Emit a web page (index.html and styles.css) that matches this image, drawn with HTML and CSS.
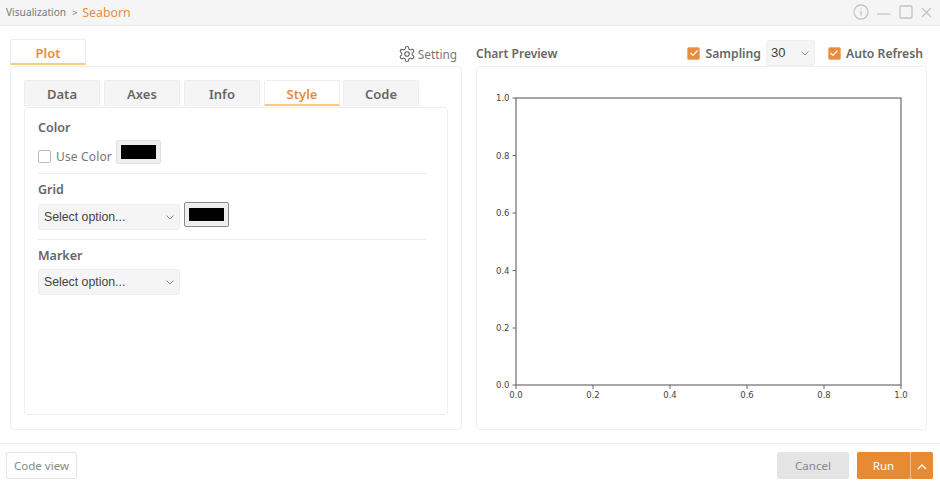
FILE: index.html
```html
<!DOCTYPE html>
<html lang="en">
<head>
    <meta charset="UTF-8">
    <title>Visualization - Seaborn</title>
    <link rel="stylesheet" href="styles.css">
</head>
<body>
    <header class="title-bar">
        <div class="crumbs">
            <span class="crumb">Visualization</span>
            <span class="crumb-sep">&gt;</span>
            <span class="crumb-current">Seaborn</span>
        </div>
        <div class="window-icons">
            <svg width="16" height="16" viewBox="0 0 16 16"><circle cx="8" cy="8" r="7"/><path d="M8 7v4.5M8 4.2v1.4"/></svg>
            <svg width="14" height="16" viewBox="0 0 14 16"><path d="M0 10h13.5"/></svg>
            <svg width="14" height="14" viewBox="0 0 14 14"><rect x="1" y="1" width="12" height="12" rx="1"/></svg>
            <svg width="11" height="11" viewBox="0 0 11 11"><path d="M1 1l9 9M10 1l-9 9"/></svg>
        </div>
    </header>

    <main class="content">
        <section class="left-col">
            <div class="col-head">
                <div class="tab tab-plot tab-active">Plot</div>
                <div class="setting">
                    <svg width="18" height="18" viewBox="0 0 24 24"><path d="M12.22 2h-.44a2 2 0 0 0-2 2v.18a2 2 0 0 1-1 1.73l-.43.25a2 2 0 0 1-2 0l-.15-.08a2 2 0 0 0-2.73.73l-.22.38a2 2 0 0 0 .73 2.73l.15.1a2 2 0 0 1 1 1.72v.51a2 2 0 0 1-1 1.74l-.15.09a2 2 0 0 0-.73 2.73l.22.38a2 2 0 0 0 2.73.73l.15-.08a2 2 0 0 1 2 0l.43.25a2 2 0 0 1 1 1.73V20a2 2 0 0 0 2 2h.44a2 2 0 0 0 2-2v-.18a2 2 0 0 1 1-1.73l.43-.25a2 2 0 0 1 2 0l.15.08a2 2 0 0 0 2.73-.73l.22-.39a2 2 0 0 0-.73-2.73l-.15-.08a2 2 0 0 1-1-1.74v-.5a2 2 0 0 1 1-1.74l.15-.09a2 2 0 0 0 .73-2.73l-.22-.38a2 2 0 0 0-2.73-.73l-.15.08a2 2 0 0 1-2 0l-.43-.25a2 2 0 0 1-1-1.73V4a2 2 0 0 0-2-2z"/><circle cx="12" cy="12" r="3"/></svg>
                    <span>Setting</span>
                </div>
            </div>
            <div class="panel">
                <div class="tabs">
                    <div class="tab">Data</div>
                    <div class="tab">Axes</div>
                    <div class="tab">Info</div>
                    <div class="tab tab-active">Style</div>
                    <div class="tab tab-last">Code</div>
                </div>
                <div class="inner">
                    <div class="group">
                        <h4>Color</h4>
                        <div class="row">
                            <span class="check"></span>
                            <span class="check-label">Use Color</span>
                            <span class="swatch"><i></i></span>
                        </div>
                    </div>
                    <div class="group">
                        <h4>Grid</h4>
                        <div class="row">
                            <div class="select">Select option...<svg class="chev" width="8" height="5" viewBox="0 0 8 5"><path d="M.5.5L4 4 7.5.5"/></svg></div>
                            <span class="swatch swatch-focus"><i></i></span>
                        </div>
                    </div>
                    <div class="group">
                        <h4>Marker</h4>
                        <div class="row">
                            <div class="select">Select option...<svg class="chev" width="8" height="5" viewBox="0 0 8 5"><path d="M.5.5L4 4 7.5.5"/></svg></div>
                        </div>
                    </div>
                </div>
            </div>
        </section>

        <section class="right-col">
            <div class="col-head preview-head">
                <span class="preview-title">Chart Preview</span>
                <div class="preview-opts">
                    <span class="check check-on"><svg width="10" height="8" viewBox="0 0 10 8"><path d="M1.5 4L4 6.5l4.5-5"/></svg></span>
                    <span class="opt-label">Sampling</span>
                    <div class="select select-small">30<svg class="chev" width="8" height="5" viewBox="0 0 8 5"><path d="M.5.5L4 4 7.5.5"/></svg></div>
                    <span class="check check-on check-gap"><svg width="10" height="8" viewBox="0 0 10 8"><path d="M1.5 4L4 6.5l4.5-5"/></svg></span>
                    <span class="opt-label">Auto Refresh</span>
                </div>
            </div>
            <div class="chart-panel">
                <svg class="chart" width="449" height="362" viewBox="0 0 449 362">
                    <rect class="axes" x="39" y="31" width="385" height="287"/>
                    <path class="ticks" d="M35.5 318H39M35.5 261H39M35.5 203.5H39M35.5 146H39M35.5 88.5H39M35.5 31H39M39 318v4M116 318v4M193 318v4M270 318v4M347 318v4M424 318v4"/>
                    <g class="y-labels">
                        <text x="32.5" y="321">0.0</text>
                        <text x="32.5" y="264">0.2</text>
                        <text x="32.5" y="206.5">0.4</text>
                        <text x="32.5" y="149">0.6</text>
                        <text x="32.5" y="91.5">0.8</text>
                        <text x="32.5" y="34">1.0</text>
                    </g>
                    <g class="x-labels">
                        <text x="39" y="331">0.0</text>
                        <text x="116" y="331">0.2</text>
                        <text x="193" y="331">0.4</text>
                        <text x="270" y="331">0.6</text>
                        <text x="347" y="331">0.8</text>
                        <text x="424" y="331">1.0</text>
                    </g>
                </svg>
            </div>
        </section>
    </main>

    <footer class="footer">
        <button class="button button-code">Code view</button>
        <div class="footer-right">
            <button class="button button-cancel">Cancel</button>
            <div class="run-group">
                <button class="button button-run">Run</button>
                <button class="button button-more"><svg width="10" height="6" viewBox="0 0 10 6"><path d="M1 5l4-4 4 4"/></svg></button>
            </div>
        </div>
    </footer>
</body>
</html>
```

FILE: styles.css
```css
* {
    box-sizing: border-box;
}
body {
    margin: 0;
    width: 940px;
    height: 484px;
    overflow: hidden;
    background-color: #fff;
    font-family: "Noto Sans", "Noto Sans CJK KR", sans-serif;
    color: #595959;
    display: flex;
    flex-direction: column;
}

/* title bar */
.title-bar {
    height: 26px;
    flex: none;
    background-color: #f5f5f5;
    border-bottom: 1px solid #e8e8e8;
    display: flex;
    align-items: center;
    justify-content: space-between;
    padding: 0 8px 1px 6px;
}
.crumbs {
    display: flex;
    align-items: center;
}
.crumb {
    font-size: 10.2px;
    color: #777;
}
.crumb-sep {
    font-size: 9px;
    color: #777;
    margin: 0 5px 0 6px;
}
.crumb-current {
    font-size: 12.3px;
    color: #e98d3c;
}
.window-icons {
    display: flex;
    align-items: center;
    gap: 8px;
}
.window-icons svg {
    fill: none;
    stroke: #c4c4c4;
    stroke-width: 1.3;
}

/* main columns */
.content {
    flex: none;
    display: flex;
    gap: 14px;
    padding: 13px 13px 13px 10px;
    border-bottom: 1px solid #ececec;
    height: 418px;
}
.left-col {
    width: 452px;
    display: flex;
    flex-direction: column;
}
.right-col {
    width: 451px;
    display: flex;
    flex-direction: column;
}
.col-head {
    height: 27px;
    flex: none;
    display: flex;
    align-items: flex-end;
    justify-content: space-between;
}

/* tabs */
.tab {
    width: 76px;
    height: 26px;
    background-color: #f5f5f5;
    border: 1px solid #eee;
    border-bottom: none;
    border-radius: 2px 2px 0 0;
    font-size: 13px;
    font-weight: 600;
    color: #666;
    text-align: center;
    line-height: 26px;
}
.tab-active {
    background-color: #fff;
    color: #e98d3c;
    border-bottom: 2px solid #f8cc7e;
}
.tab-plot {
    margin-bottom: 1px;
}
.tab-last {
    margin-left: -1px;
}
.tabs {
    display: flex;
    gap: 4px;
}
.setting {
    display: flex;
    align-items: center;
    gap: 2px;
    font-size: 11.8px;
    color: #777;
    margin: 0 5px 3px 0;
}
.setting svg {
    fill: none;
    stroke: #666;
    stroke-width: 1.5;
}
.panel {
    flex: 1;
    border: 1px solid #eee;
    border-radius: 4px;
    padding: 13px 13px 14px 13px;
    display: flex;
    flex-direction: column;
}
.inner {
    flex: 1;
    margin-top: 1px;
    border: 1px solid #eee;
    border-radius: 4px;
    padding: 11px 21px 0 13px;
}

/* form groups */
.group {
    border-bottom: 1px solid #eee;
    margin-bottom: 7px;
    padding-bottom: 9px;
}
.group:last-child {
    border-bottom: none;
}
.group h4 {
    margin: 0 0 3px 0;
    font-size: 12.5px;
    font-weight: 600;
    color: #666;
    line-height: 18px;
}
.row {
    display: flex;
    align-items: flex-start;
}
.check {
    width: 13px;
    height: 13px;
    flex: none;
    border: 1px solid #bbb;
    border-radius: 2px;
    background-color: #fff;
}
.row .check {
    margin-top: 10px;
}
.check-on {
    background-color: #e98d3c;
    border-color: #f0b27c;
    margin-top: 1px;
    display: flex;
    align-items: center;
    justify-content: center;
}
.check-on svg {
    fill: none;
    stroke: #fff;
    stroke-width: 1.2;
}
.check-gap {
    margin-left: 13px;
}
.check-label {
    font-size: 12px;
    letter-spacing: .15px;
    line-height: 15px;
    color: #777;
    margin: 9px 4px 0 5px;
}
.swatch {
    width: 45px;
    height: 24px;
    background-color: #efefef;
    border: 1px solid #e0e0e0;
    border-radius: 2px;
    padding: 4px;
    display: flex;
}
.swatch i {
    flex: 1;
    background-color: #000;
}
.swatch-focus {
    margin-left: 4px;
    height: 25px;
    padding-top: 5px;
    padding-bottom: 5px;
    border-color: #8a8a8a;
}
.select {
    position: relative;
    width: 142px;
    height: 26px;
    margin-top: 2px;
    background-color: #f5f5f5;
    border: 1px solid #eee;
    border-radius: 3px;
    padding-left: 5px;
    font-family: "Liberation Sans", Arial, sans-serif;
    font-size: 12.3px;
    color: #444;
    line-height: 24px;
}
.group:last-child .select {
    margin-top: 1px;
}
.select-small {
    width: 49px;
    margin: 0 0 0 5px;
    padding-left: 4px;
    font-size: 13px;
    line-height: 24px;
}
.chev {
    position: absolute;
    right: 5px;
    top: 10px;
    fill: none;
    stroke: #888;
    stroke-width: 1;
}

/* chart preview */
.preview-head {
    align-items: center;
}
.preview-title {
    font-size: 12px;
    font-weight: 600;
    color: #666;
    padding-top: 2px;
}
.preview-opts {
    display: flex;
    align-items: center;
    margin-right: 4px;
}
.opt-label {
    font-size: 12.2px;
    font-weight: 600;
    color: #666;
    margin-left: 5px;
    padding-top: 2px;
}
.chart-panel {
    flex: 1;
    border: 1px solid #eee;
    border-radius: 4px;
}
.chart {
    display: block;
}
.axes {
    fill: #fff;
    stroke: #777;
    stroke-width: 1.3;
}
.ticks {
    fill: none;
    stroke: #666;
    stroke-width: 1;
}
.chart text {
    font-family: "DejaVu Sans", sans-serif;
    font-size: 8.5px;
    fill: #444;
}
.y-labels text {
    text-anchor: end;
}
.x-labels text {
    text-anchor: middle;
}

/* footer */
.footer {
    height: 40px;
    flex: none;
    display: flex;
    align-items: flex-start;
    justify-content: space-between;
    padding: 8px 7px 0 6px;
}
.footer-right {
    display: flex;
    gap: 8px;
}
.button {
    height: 27px;
    border: none;
    border-radius: 2px;
    font-family: "Noto Sans", sans-serif;
    font-size: 11.5px;
    padding: 0;
}
.button-code {
    width: 71px;
    background-color: #fff;
    border: 1px solid #e4e4e4;
    color: #888;
}
.button-cancel {
    width: 72px;
    background-color: #e4e4e4;
    color: #888;
}
.run-group {
    display: flex;
    gap: 1px;
    background-color: #f0bd8a;
    border-radius: 2px;
}
.button-run {
    width: 53px;
    background-color: #e68b33;
    color: #fff;
}
.button-more {
    width: 22px;
    background-color: #e68b33;
}
.button-more svg {
    fill: none;
    stroke: #fff;
    stroke-width: 1.4;
}
```
